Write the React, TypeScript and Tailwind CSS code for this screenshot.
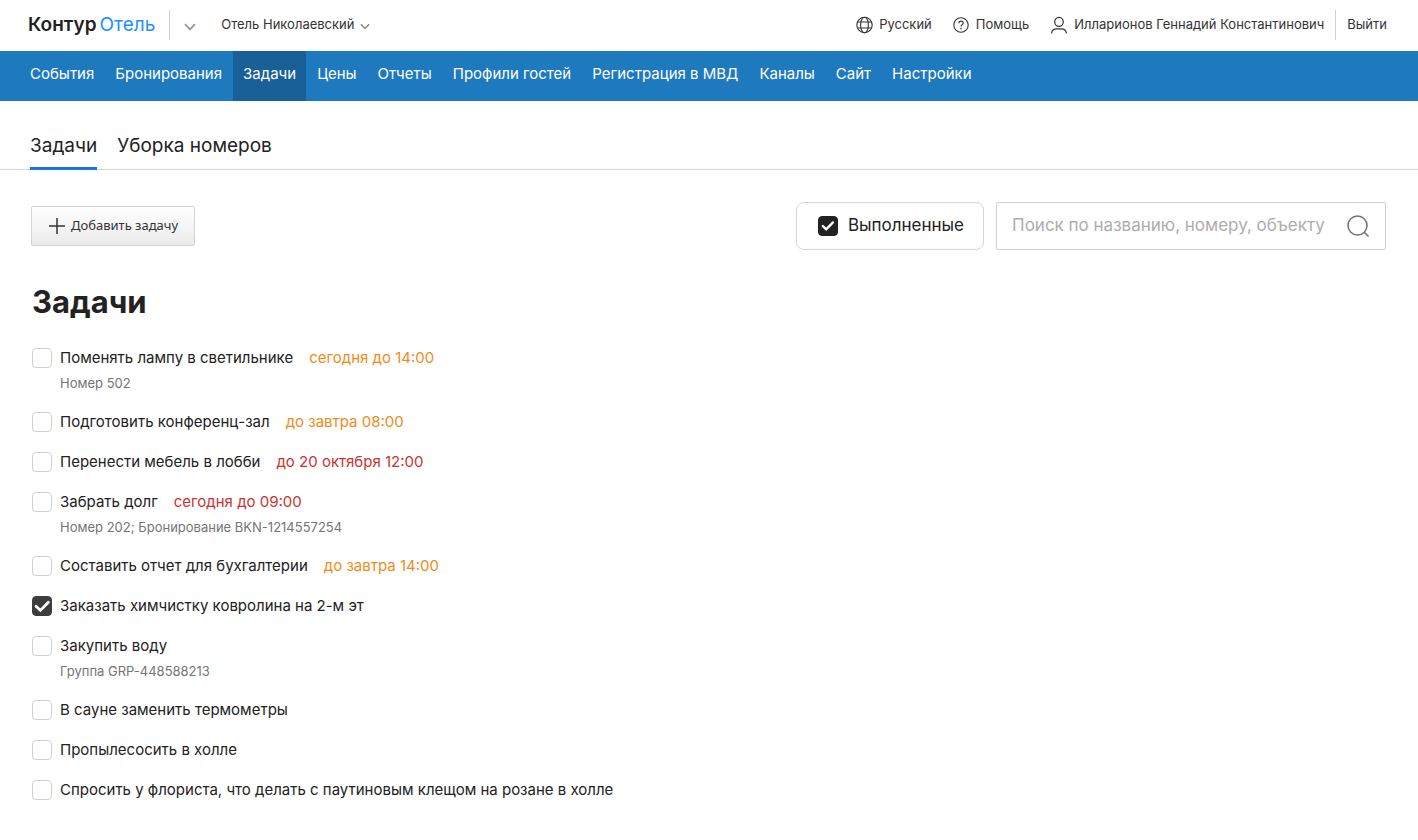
import { useState } from "react";

type Tone = "orange" | "red";

interface Task {
  title: string;
  due?: string;
  tone?: Tone;
  note?: string;
  done?: boolean;
}

const NAV = [
  "События",
  "Бронирования",
  "Задачи",
  "Цены",
  "Отчеты",
  "Профили гостей",
  "Регистрация в МВД",
  "Каналы",
  "Сайт",
  "Настройки",
];

const TASKS: Task[] = [
  { title: "Поменять лампу в светильнике", due: "сегодня до 14:00", tone: "orange", note: "Номер 502" },
  { title: "Подготовить конференц-зал", due: "до завтра 08:00", tone: "orange" },
  { title: "Перенести мебель в лобби", due: "до 20 октября 12:00", tone: "red" },
  { title: "Забрать долг", due: "сегодня до 09:00", tone: "red", note: "Номер 202; Бронирование BKN-1214557254" },
  { title: "Составить отчет для бухгалтерии", due: "до завтра 14:00", tone: "orange" },
  { title: "Заказать химчистку ковролина на 2-м эт", done: true },
  { title: "Закупить воду", note: "Группа GRP-448588213" },
  { title: "В сауне заменить термометры" },
  { title: "Пропылесосить в холле" },
  { title: "Спросить у флориста, что делать с паутиновым клещом на розане в холле" },
];

function Chevron({ className }: { className: string }) {
  return (
    <svg viewBox="0 0 12 8" fill="none" stroke="currentColor" className={className} aria-hidden="true">
      <path d="M1 1.2 6 6.4l5-5.2" strokeWidth="1.8" />
    </svg>
  );
}

function GlobeIcon() {
  return (
    <svg width="17" height="18" viewBox="0 0 17 18" fill="none" stroke="currentColor" strokeWidth="1.1" aria-hidden="true">
      <circle cx="8.5" cy="9" r="7.7" />
      <ellipse cx="8.5" cy="9" rx="3.9" ry="7.700" />
      <path d="M1.500 6h14M1.500 12h14" />
    </svg>
  );
}

function HelpIcon() {
  return (
    <svg width="16" height="18" viewBox="0 0 16 18" fill="none" stroke="currentColor" strokeWidth="1.1" aria-hidden="true">
      <circle cx="8" cy="9" r="7.2" />
      <path d="M5.8 7.3c0-1.4 1-2.2 2.2-2.2s2.2.8 2.2 2c0 1.6-2.2 1.7-2.2 3.4" />
      <path d="M8 11.8v1.4" strokeWidth="1.3" />
    </svg>
  );
}

function UserIcon() {
  return (
    <svg width="16" height="18" viewBox="0 0 16 18" fill="none" stroke="currentColor" strokeWidth="1.2" aria-hidden="true">
      <ellipse cx="8" cy="5.800" rx="4.300" ry="4.500" />
      <path d="M.6 17.400c.2-2.900 2.400-4.600 5-4.600h4.800c2.600 0 4.800 1.700 5 4.600" />
    </svg>
  );
}

function Check({ id, defaultChecked, dark }: { id: string; defaultChecked?: boolean; dark?: boolean }) {
  return (
    <span className="relative block size-5 shrink-0">
      <input
        id={id}
        type="checkbox"
        defaultChecked={defaultChecked}
        className={
          dark
            ? "peer block size-5 appearance-none rounded border border-[#d0d0d0] bg-white checked:border-[#222] checked:bg-[#222]"
            : "peer block size-5 appearance-none rounded border border-[#d0d0d0] bg-white checked:border-[#3d3d3d] checked:bg-[#3d3d3d]"
        }
      />
      <svg
        viewBox="0 0 20 20"
        fill="none"
        stroke="#fff"
        className="pointer-events-none absolute inset-0 hidden size-5 peer-checked:block"
        aria-hidden="true"
      >
        {dark ? (
          <path d="m4.800 10 3.400 3.400 6.800-7" strokeWidth="2.400" strokeLinecap="round" />
        ) : (
          <path d="m4 10.200 4.400 4.200 8-8.200" strokeWidth="2.800" strokeLinecap="round" />
        )}
      </svg>
    </span>
  );
}

export default function App() {
  const [query, setQuery] = useState("");

  return (
    <div className="min-h-screen bg-white font-[Inter,sans-serif] text-[#222]">
      <header className="flex h-[51px] items-center pr-[31px] pb-[2px] pl-7 text-[13px] text-[#333]">
        <a href="#home" className="flex gap-[3px] text-[19px] leading-6">
          <span className="font-semibold text-[#222]">Контур</span>
          <span className="text-[#2291ff]">Отель</span>
        </a>
        <span className="ml-[14px] h-[30px] w-px bg-[#d0d0d0]" />
        <button type="button" aria-label="Сервисы" className="ml-[14px] pt-1 text-[#999]">
          <Chevron className="h-2 w-3" />
        </button>
        <button type="button" className="ml-[25px] flex items-center gap-[6px]">
          Отель Николаевский
          <Chevron className="mt-1 h-[7px] w-[10px] text-[#888]" />
        </button>
        <div className="ml-auto flex items-center">
          <a href="#lang" className="flex items-center gap-[6px]">
            <GlobeIcon />
            Русский
          </a>
          <a href="#help" className="ml-[21px] flex items-center gap-[7px]">
            <HelpIcon />
            Помощь
          </a>
          <a href="#profile" className="ml-[22px] flex items-center gap-[7px]">
            <UserIcon />
            Илларионов Геннадий Константинович
          </a>
          <span className="mx-[11px] h-[30px] w-px bg-[#d0d0d0]" />
          <a href="#logout">Выйти</a>
        </div>
      </header>

      <nav className="flex h-[50px] gap-px bg-[#1e79be] px-5 text-[15px] text-white">
        {NAV.map((item) => (
          <a
            key={item}
            href="#nav"
            className={
              item === "Задачи"
                ? "flex items-center bg-[#1a6098] px-[10px] pb-1"
                : "flex items-center px-[10px] pb-1"
            }
          >
            {item}
          </a>
        ))}
      </nav>

      <div className="flex h-[69px] items-end gap-5 border-b border-[#d6d6d6] px-[30px] text-[19px] leading-6">
        <a href="#tasks" className="-mb-px border-b-3 border-[#1d75d1] pb-[9px]">
          Задачи
        </a>
        <a href="#cleaning" className="pb-[11px]">
          Уборка номеров
        </a>
      </div>

      <main className="px-8 pt-8">
        <div className="flex items-center">
          <button
            type="button"
            className="-ml-px flex h-10 items-center gap-[5px] rounded-[2px] border border-[#d3d3d3] bg-linear-to-b from-white to-[#ebebeb] px-4 font-['Noto_Sans',sans-serif] text-[13px] text-[#333]"
          >
            <svg width="18" height="16" viewBox="0 0 18 16" stroke="currentColor" strokeWidth="1.5" aria-hidden="true">
              <path d="M9 0v16M1 8h16" />
            </svg>
            Добавить задачу
          </button>
          <label
            htmlFor="show-done"
            className="ml-auto flex h-12 items-center gap-[10px] rounded-lg border border-[#d6d6d6] pr-[19px] pl-[21px] text-[17px]"
          >
            <Check id="show-done" defaultChecked dark />
            Выполненные
          </label>
          <div className="ml-3 flex h-12 w-[390px] items-center rounded-[2px] border border-[#d0d0d0] px-[15px]">
            <input
              type="text"
              aria-label="Поиск"
              placeholder="Поиск по названию, номеру, объекту"
              value={query}
              onChange={(e) => setQuery(e.target.value)}
              className="min-w-0 flex-1 text-[17px] outline-none placeholder:text-[#adadad]"
            />
            <button type="button" aria-label="Найти" className="text-[#757575]">
              <svg width="24" height="24" viewBox="0 0 24 24" fill="none" stroke="currentColor" strokeWidth="1.6" aria-hidden="true">
                <circle cx="11.500" cy="11.500" r="9.500" />
                <path d="m18.300 18.300 4.200 4.200" />
              </svg>
            </button>
          </div>
        </div>

        <h1 className="mt-8 text-[31px] leading-10 font-bold">Задачи</h1>

        <ul className="mt-[26px] flex flex-col gap-5 pb-10">
          {TASKS.map((task, i) => (
            <li key={task.title} className="flex gap-2">
              <Check id={`task-${i}`} defaultChecked={task.done} />
              <div>
                <div className="flex gap-4 text-[15px] leading-5">
                  <label htmlFor={`task-${i}`}>{task.title}</label>
                  {task.due && (
                    <span className={task.tone === "red" ? "text-[#cb3331]" : "text-[#f08c17]"}>{task.due}</span>
                  )}
                </div>
                {task.note && <p className="mt-[7px] pb-px text-[13px] leading-4 text-[#757575]">{task.note}</p>}
              </div>
            </li>
          ))}
        </ul>
      </main>
    </div>
  );
}
